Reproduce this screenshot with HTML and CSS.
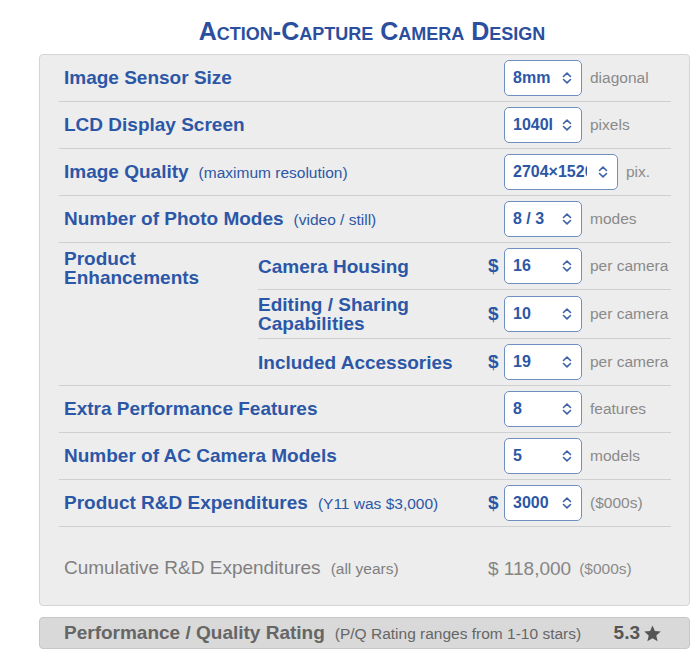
FILE: index.html
```html
<!DOCTYPE html>
<html>
<head>
<meta charset="utf-8">
<link rel="stylesheet" href="styles.css">
</head>
<body>
<h1 class="title">Action-Capture Camera Design</h1>
<div class="panel">
  <div class="row">
    <div class="label">Image Sensor Size</div>
    <div class="ctrl"><span class="dollar"></span><div class="select"><span class="val">8mm</span><svg class="chev" viewBox="0 0 10 14"><path d="M1.5 5.5L5 2.2L8.5 5.5M1.5 8.5L5 11.8L8.5 8.5"/></svg></div><span class="unit">diagonal</span></div>
  </div>
  <div class="row">
    <div class="label">LCD Display Screen</div>
    <div class="ctrl"><span class="dollar"></span><div class="select"><span class="val">1040l</span><svg class="chev" viewBox="0 0 10 14"><path d="M1.5 5.5L5 2.2L8.5 5.5M1.5 8.5L5 11.8L8.5 8.5"/></svg></div><span class="unit">pixels</span></div>
  </div>
  <div class="row">
    <div class="label">Image Quality<span class="note">(maximum resolution)</span></div>
    <div class="ctrl"><span class="dollar"></span><div class="select wide"><span class="val">2704×1520</span><svg class="chev" viewBox="0 0 10 14"><path d="M1.5 5.5L5 2.2L8.5 5.5M1.5 8.5L5 11.8L8.5 8.5"/></svg></div><span class="unit">pix.</span></div>
  </div>
  <div class="row">
    <div class="label">Number of Photo Modes<span class="note">(video / still)</span></div>
    <div class="ctrl"><span class="dollar"></span><div class="select"><span class="val">8 / 3</span><svg class="chev" viewBox="0 0 10 14"><path d="M1.5 5.5L5 2.2L8.5 5.5M1.5 8.5L5 11.8L8.5 8.5"/></svg></div><span class="unit">modes</span></div>
  </div>
  <div class="group">
    <div class="group-label label">Product Enhancements</div>
    <div class="subrows">
      <div class="subrow">
        <div class="label sub">Camera Housing</div>
        <div class="ctrl"><span class="dollar">$</span><div class="select"><span class="val">16</span><svg class="chev" viewBox="0 0 10 14"><path d="M1.5 5.5L5 2.2L8.5 5.5M1.5 8.5L5 11.8L8.5 8.5"/></svg></div><span class="unit">per camera</span></div>
      </div>
      <div class="subrow">
        <div class="label sub">Editing / Sharing Capabilities</div>
        <div class="ctrl"><span class="dollar">$</span><div class="select"><span class="val">10</span><svg class="chev" viewBox="0 0 10 14"><path d="M1.5 5.5L5 2.2L8.5 5.5M1.5 8.5L5 11.8L8.5 8.5"/></svg></div><span class="unit">per camera</span></div>
      </div>
      <div class="subrow">
        <div class="label sub">Included Accessories</div>
        <div class="ctrl"><span class="dollar">$</span><div class="select"><span class="val">19</span><svg class="chev" viewBox="0 0 10 14"><path d="M1.5 5.5L5 2.2L8.5 5.5M1.5 8.5L5 11.8L8.5 8.5"/></svg></div><span class="unit">per camera</span></div>
      </div>
    </div>
  </div>
  <div class="row">
    <div class="label">Extra Performance Features</div>
    <div class="ctrl"><span class="dollar"></span><div class="select"><span class="val">8</span><svg class="chev" viewBox="0 0 10 14"><path d="M1.5 5.5L5 2.2L8.5 5.5M1.5 8.5L5 11.8L8.5 8.5"/></svg></div><span class="unit">features</span></div>
  </div>
  <div class="row">
    <div class="label">Number of AC Camera Models</div>
    <div class="ctrl"><span class="dollar"></span><div class="select"><span class="val">5</span><svg class="chev" viewBox="0 0 10 14"><path d="M1.5 5.5L5 2.2L8.5 5.5M1.5 8.5L5 11.8L8.5 8.5"/></svg></div><span class="unit">models</span></div>
  </div>
  <div class="row">
    <div class="label">Product R&amp;D Expenditures<span class="note">(Y11 was $3,000)</span></div>
    <div class="ctrl"><span class="dollar">$</span><div class="select"><span class="val">3000</span><svg class="chev" viewBox="0 0 10 14"><path d="M1.5 5.5L5 2.2L8.5 5.5M1.5 8.5L5 11.8L8.5 8.5"/></svg></div><span class="unit">($000s)</span></div>
  </div>
  <div class="cum">
    <div class="cum-label">Cumulative R&amp;D Expenditures<span class="note">(all years)</span></div>
    <div class="ctrl cum-val">$ 118,000<span class="unit">($000s)</span></div>
  </div>
</div>
<div class="rating">
  <div class="rating-label">Performance / Quality Rating<span class="note">(P/Q Rating ranges from 1-10 stars)</span></div>
  <div class="score">5.3<svg class="star" viewBox="0 0 24 24"><path d="M12 1.8l3 6.9 7.4.7-5.6 5 1.7 7.3L12 17.9l-6.5 3.8 1.7-7.3-5.6-5 7.4-.7z"/></svg></div>
</div>
</body>
</html>
```
FILE: styles.css
```css
body {
  margin: 0;
  font-family: "Liberation Sans", Arial, sans-serif;
  background: #ffffff;
}

.title {
  margin: 16px 0 8px 39px;
  width: 666px;
  text-align: center;
  font-size: 25px;
  line-height: 30px;
  font-weight: bold;
  font-variant: small-caps;
  color: #2b4f9e;
}

.panel {
  margin-left: 39px;
  width: 651px;
  box-sizing: border-box;
  background: #ededed;
  border: 1px solid #d5d5d5;
  border-radius: 4px;
  padding: 0 18px 0 19px;
}

.row {
  display: flex;
  align-items: center;
  padding: 5px 0 5px 5px;
  border-bottom: 1px solid #cfcfcf;
}

.label {
  flex: 1;
  font-size: 19px;
  line-height: 22px;
  font-weight: bold;
  color: #2c57a6;
}

.note {
  font-size: 15.5px;
  font-weight: normal;
  margin-left: 10px;
}

.ctrl {
  flex: none;
  width: 183px;
  display: flex;
  align-items: center;
}

.dollar {
  width: 16px;
  flex: none;
  font-size: 19px;
  font-weight: bold;
  color: #2c57a6;
}

.select {
  flex: none;
  width: 78px;
  height: 36px;
  box-sizing: border-box;
  border: 1px solid #6f8fbf;
  border-radius: 5px;
  background: #ffffff;
  display: flex;
  align-items: center;
}

.select.wide {
  width: 114px;
}

.val {
  flex: 1;
  min-width: 0;
  padding-left: 8px;
  overflow: hidden;
  white-space: nowrap;
  font-size: 16px;
  font-weight: bold;
  color: #2c57a6;
}

.select.wide .val {
  margin-right: 7px;
}

.chev {
  flex: none;
  width: 10px;
  height: 14px;
  margin: 0 9px 0 4px;
  fill: none;
  stroke: #3d62a8;
  stroke-width: 1.6;
  stroke-linecap: round;
  stroke-linejoin: round;
}

.unit {
  margin-left: 8px;
  font-size: 15.5px;
  color: #8a8a8a;
  white-space: nowrap;
}

.group {
  display: flex;
  border-bottom: 1px solid #cfcfcf;
}

.group-label {
  flex: none;
  width: 199px;
  box-sizing: border-box;
  padding: 6px 0 0 5px;
  line-height: 19px;
}

.subrows {
  flex: 1;
}

.subrow {
  display: flex;
  align-items: center;
  padding: 5px 0;
  border-bottom: 1px solid #cfcfcf;
}

.subrow:last-child {
  border-bottom: none;
}

.label.sub {
  line-height: 19px;
}

.cum {
  display: flex;
  align-items: center;
  padding: 29px 0 24px 5px;
  line-height: 24px;
  font-size: 19px;
  color: #7f7f7f;
}

.cum-label {
  flex: 1;
}

.cum-val {
  padding-left: 1px;
  color: #858585;
}

.rating {
  margin: 11px 0 0 39px;
  width: 651px;
  height: 32px;
  box-sizing: border-box;
  background: #d9d9d9;
  border: 1px solid #c7c7c7;
  border-radius: 4px;
  display: flex;
  align-items: center;
  padding: 0 27px 0 24px;
  color: #666666;
}

.rating-label {
  flex: 1;
  font-size: 19px;
  font-weight: bold;
}

.rating-label .note {
  color: #666666;
}

.score {
  display: flex;
  align-items: center;
  gap: 3px;
  font-size: 19px;
  font-weight: bold;
  color: #555555;
}

.star {
  width: 19px;
  height: 19px;
  fill: #555555;
}
```
